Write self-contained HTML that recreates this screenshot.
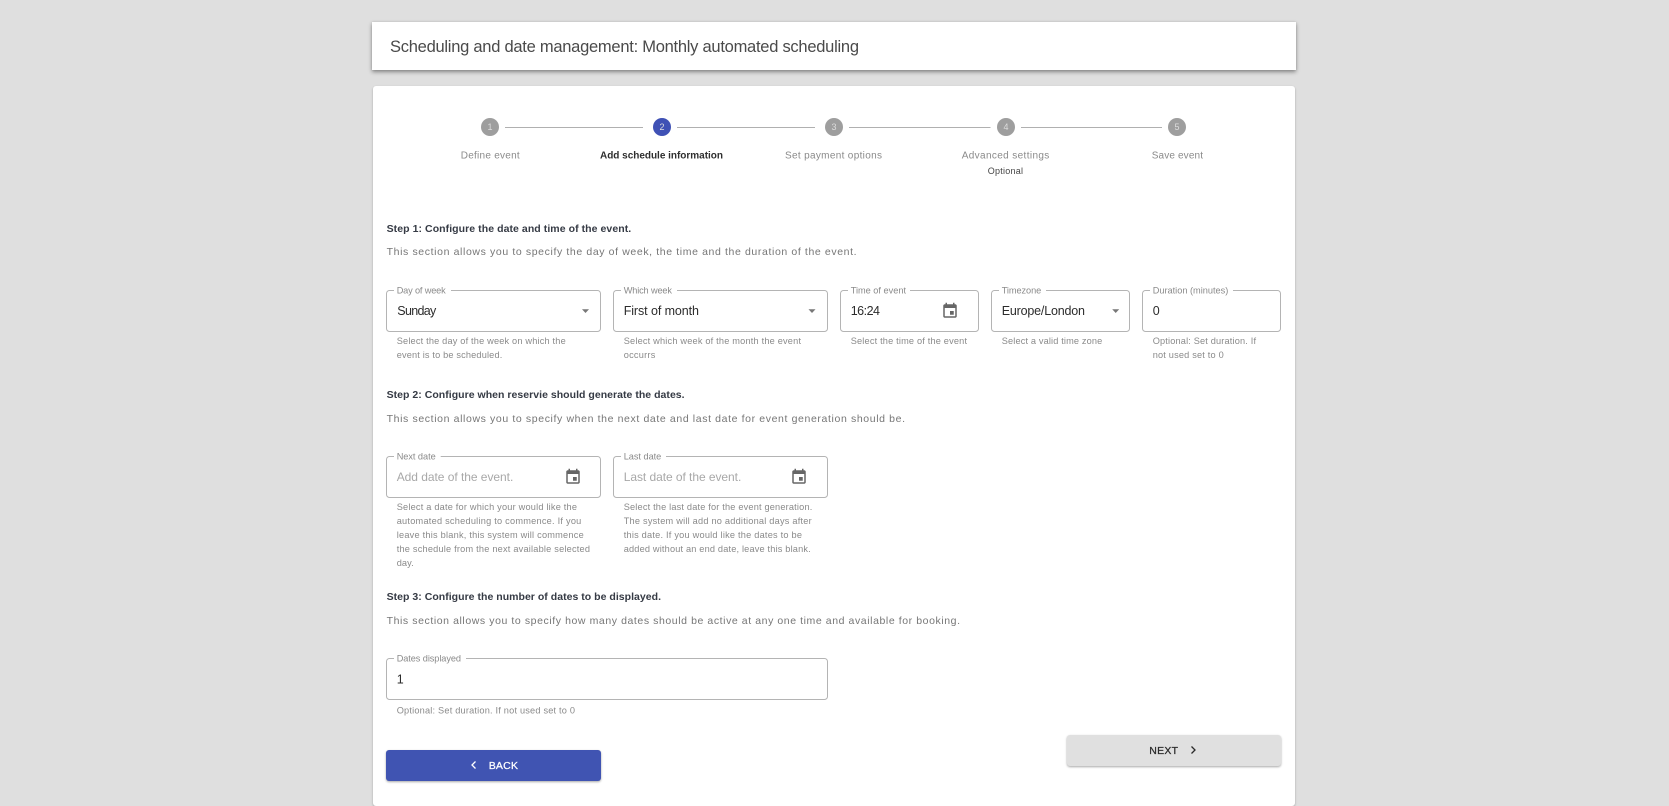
<!DOCTYPE html>
<html lang="en">
<head>
<meta charset="utf-8">
<title>Monthly automated scheduling</title>
<style>
html,body{margin:0;padding:0;width:1669px;height:788px;overflow:hidden;background:#dfdfdf;font-family:"Liberation Sans",Arial,sans-serif}
.hdr{position:absolute;left:372px;top:22px;width:924px;height:48px;background:#fff;box-shadow:0 2px 4px rgba(0,0,0,.4),0 0 2px rgba(0,0,0,.1)}
.card{position:absolute;left:373px;top:86px;width:922px;height:720px;background:#fff;border-radius:3px;box-shadow:0 1px 2px rgba(0,0,0,.25)}
.btn{position:absolute;height:31px;border-radius:3px;box-shadow:0 1px 2px rgba(0,0,0,.35)}
svg{position:absolute;left:0;top:0;filter:blur(.25px)}
text{font-family:"Liberation Sans",Arial,sans-serif}
.title{font-size:16.5px;fill:#4a4a4a}
.st{font-size:10px;fill:#8a8a8a}
.sa{font-size:10px;font-weight:bold;fill:#2e2e2e}
.op{font-size:9px;fill:#444}
.n{font-size:9px;fill:#ddd;text-anchor:middle}
.h{font-size:10.5px;font-weight:bold;fill:#353a44}
.d{font-size:10.5px;fill:#767676}
.l{font-size:9.2px;fill:#8a8a8a}
.v{font-size:12.5px;fill:#2c2c2c}
.p{font-size:12px;fill:#a8a8a8}
.b{fill:none;stroke:#b4b4b4;stroke-width:1}
.w{stroke:#fff;stroke-width:3}
.sl{stroke:#b0b0b0;stroke-width:1}
</style>
</head>
<body>
<div class="hdr"></div>
<div class="card"></div>
<div class="btn" style="left:386px;top:750px;width:214.7px;background:#4054b2"></div>
<div class="btn" style="left:1067.3px;top:735px;width:213.4px;background:#e0e0e0"></div>
<svg width="1669" height="788" viewBox="0 0 1669 788" xmlns="http://www.w3.org/2000/svg">
<defs>
<path id="cal" d="M17 12h-5v5h5v-5zM16 1v2H8V1H6v2H5c-1.11 0-1.99.9-1.99 2L3 19c0 1.1.89 2 2 2h14c1.1 0 2-.9 2-2V5c0-1.1-.9-2-2-2h-1V1h-2zm3 18H5V8h14v11z"/>
</defs>
<text class="title" x="390" y="52" textLength="469" lengthAdjust="spacing">Scheduling and date management: Monthly automated scheduling</text>

<!-- stepper -->
<line class="sl" x1="505" y1="127.5" x2="643" y2="127.5"/>
<line class="sl" x1="677" y1="127.5" x2="815" y2="127.5"/>
<line class="sl" x1="849" y1="127.5" x2="990.5" y2="127.5"/>
<line class="sl" x1="1021" y1="127.5" x2="1162" y2="127.5"/>
<circle cx="490" cy="127" r="9" fill="#9e9e9e"/><text class="n" x="490" y="130.2">1</text>
<circle cx="662" cy="127" r="9" fill="#3f51b5"/><text class="n" x="662" y="130.2">2</text>
<circle cx="834" cy="127" r="9" fill="#9e9e9e"/><text class="n" x="834" y="130.2">3</text>
<circle cx="1006" cy="127" r="9" fill="#9e9e9e"/><text class="n" x="1006" y="130.2">4</text>
<circle cx="1177" cy="127" r="9" fill="#9e9e9e"/><text class="n" x="1177" y="130.2">5</text>
<text class="st" x="460.7" y="158.6" textLength="59" lengthAdjust="spacing">Define event</text>
<text class="sa" x="600" y="158.6" textLength="123" lengthAdjust="spacing">Add schedule information</text>
<text class="st" x="785" y="158.6" textLength="97" lengthAdjust="spacing">Set payment options</text>
<text class="st" x="961.7" y="158.6" textLength="87.6" lengthAdjust="spacing">Advanced settings</text>
<text class="op" x="987.7" y="174.2" textLength="35.3" lengthAdjust="spacing">Optional</text>
<text class="st" x="1151.7" y="158.6" textLength="51.3" lengthAdjust="spacing">Save event</text>

<!-- step 1 -->
<text class="h" x="386.6" y="231.8" textLength="244.6" lengthAdjust="spacing">Step 1: Configure the date and time of the event.</text>
<text class="d" x="386.6" y="255" textLength="470" lengthAdjust="spacing">This section allows you to specify the day of week, the time and the duration of the event.</text>

<rect class="b" x="386.5" y="290.5" width="214" height="41" rx="3"/><line class="w" x1="394" y1="290.5" x2="451" y2="290.5"/>
<text class="l" x="396.7" y="293.3" textLength="49" lengthAdjust="spacing">Day of week</text>
<text class="v" x="397.3" y="315" textLength="39" lengthAdjust="spacing">Sunday</text>
<path d="M582 309.3h7l-3.5 3.7z" fill="#777"/>
<text class="l" x="396.7" y="344" textLength="169" lengthAdjust="spacing">Select the day of the week on which the</text>
<text class="l" x="396.7" y="358" textLength="105.6" lengthAdjust="spacing">event is to be scheduled.</text>

<rect class="b" x="613.5" y="290.5" width="214" height="41" rx="3"/><line class="w" x1="621" y1="290.5" x2="677" y2="290.5"/>
<text class="l" x="623.7" y="293.3" textLength="48.3" lengthAdjust="spacing">Which week</text>
<text class="v" x="623.7" y="315" textLength="75.3" lengthAdjust="spacing">First of month</text>
<path d="M808.5 309.3h7l-3.5 3.7z" fill="#777"/>
<text class="l" x="623.7" y="344" textLength="177.3" lengthAdjust="spacing">Select which week of the month the event</text>
<text class="l" x="623.7" y="358" textLength="31.6" lengthAdjust="spacing">occurrs</text>

<rect class="b" x="840.5" y="290.5" width="138" height="41" rx="3"/><line class="w" x1="848" y1="290.5" x2="910" y2="290.5"/>
<text class="l" x="850.7" y="293.3" textLength="55.3" lengthAdjust="spacing">Time of event</text>
<text class="v" x="850.7" y="315" textLength="29.3" lengthAdjust="spacing">16:24</text>
<use href="#cal" transform="translate(941 302) scale(.75)" fill="#666"/>
<text class="l" x="850.7" y="344" textLength="116.3" lengthAdjust="spacing">Select the time of the event</text>

<rect class="b" x="991.5" y="290.5" width="138" height="41" rx="3"/><line class="w" x1="999" y1="290.5" x2="1046" y2="290.5"/>
<text class="l" x="1001.7" y="293.3" textLength="39.6" lengthAdjust="spacing">Timezone</text>
<text class="v" x="1001.7" y="315" textLength="83.3" lengthAdjust="spacing">Europe/London</text>
<path d="M1112.2 309.3h7l-3.5 3.7z" fill="#777"/>
<text class="l" x="1001.7" y="344" textLength="100.6" lengthAdjust="spacing">Select a valid time zone</text>

<rect class="b" x="1142.5" y="290.5" width="138" height="41" rx="3"/><line class="w" x1="1150" y1="290.5" x2="1233" y2="290.5"/>
<text class="l" x="1152.7" y="293.3" textLength="75.6" lengthAdjust="spacing">Duration (minutes)</text>
<text class="v" x="1152.7" y="315">0</text>
<text class="l" x="1152.7" y="344" textLength="103.3" lengthAdjust="spacing">Optional: Set duration. If</text>
<text class="l" x="1152.7" y="358" textLength="71" lengthAdjust="spacing">not used set to 0</text>

<!-- step 2 -->
<text class="h" x="386.6" y="398" textLength="298" lengthAdjust="spacing">Step 2: Configure when reservie should generate the dates.</text>
<text class="d" x="386.6" y="422" textLength="518.4" lengthAdjust="spacing">This section allows you to specify when the next date and last date for event generation should be.</text>

<rect class="b" x="386.5" y="456.5" width="214" height="41" rx="3"/><line class="w" x1="394" y1="456.5" x2="440.7" y2="456.5"/>
<text class="l" x="396.7" y="459.3" textLength="39" lengthAdjust="spacing">Next date</text>
<text class="p" x="396.7" y="481" textLength="116.6" lengthAdjust="spacing">Add date of the event.</text>
<use href="#cal" transform="translate(564 468) scale(.75)" fill="#666"/>
<text class="l" x="396.7" y="510" textLength="180.3" lengthAdjust="spacing">Select a date for which your would like the</text>
<text class="l" x="396.7" y="524" textLength="184.6" lengthAdjust="spacing">automated scheduling to commence. If you</text>
<text class="l" x="396.7" y="538" textLength="187" lengthAdjust="spacing">leave this blank, this system will commence</text>
<text class="l" x="396.7" y="552" textLength="193.3" lengthAdjust="spacing">the schedule from the next available selected</text>
<text class="l" x="396.7" y="566" textLength="17" lengthAdjust="spacing">day.</text>

<rect class="b" x="613.5" y="456.5" width="214" height="41" rx="3"/><line class="w" x1="621" y1="456.5" x2="666" y2="456.5"/>
<text class="l" x="623.7" y="459.3" textLength="37.6" lengthAdjust="spacing">Last date</text>
<text class="p" x="623.7" y="481" textLength="117.6" lengthAdjust="spacing">Last date of the event.</text>
<use href="#cal" transform="translate(790 468) scale(.75)" fill="#666"/>
<text class="l" x="623.7" y="510" textLength="188.6" lengthAdjust="spacing">Select the last date for the event generation.</text>
<text class="l" x="623.7" y="524" textLength="188" lengthAdjust="spacing">The system will add no additional days after</text>
<text class="l" x="623.7" y="538" textLength="178.3" lengthAdjust="spacing">this date. If you would like the dates to be</text>
<text class="l" x="623.7" y="552" textLength="187" lengthAdjust="spacing">added without an end date, leave this blank.</text>

<!-- step 3 -->
<text class="h" x="386.6" y="600" textLength="274.4" lengthAdjust="spacing">Step 3: Configure the number of dates to be displayed.</text>
<text class="d" x="386.6" y="624" textLength="573.4" lengthAdjust="spacing">This section allows you to specify how many dates should be active at any one time and available for booking.</text>

<rect class="b" x="386.5" y="658.5" width="441" height="41" rx="3"/><line class="w" x1="394" y1="658.5" x2="466" y2="658.5"/>
<text class="l" x="396.7" y="661.3" textLength="64.3" lengthAdjust="spacing">Dates displayed</text>
<text class="v" x="396.7" y="683.3">1</text>
<text class="l" x="396.7" y="713.3" textLength="178.3" lengthAdjust="spacing">Optional: Set duration. If not used set to 0</text>

<!-- buttons -->
<path d="M475.5 761.5l-3.5 3.5 3.5 3.5" fill="none" stroke="#fff" stroke-width="1.3"/>
<text x="488.7" y="769" font-size="10.5" fill="#fff" stroke="#fff" stroke-width=".25" textLength="29.3" lengthAdjust="spacing">BACK</text>
<text x="1149.3" y="754" font-size="10.5" fill="#2a2a2a" stroke="#2a2a2a" stroke-width=".25" textLength="28.7" lengthAdjust="spacing">NEXT</text>
<path d="M1191.5 746.5l3.5 3.5-3.5 3.5" fill="none" stroke="#2a2a2a" stroke-width="1.3"/>
</svg>
</body>
</html>
